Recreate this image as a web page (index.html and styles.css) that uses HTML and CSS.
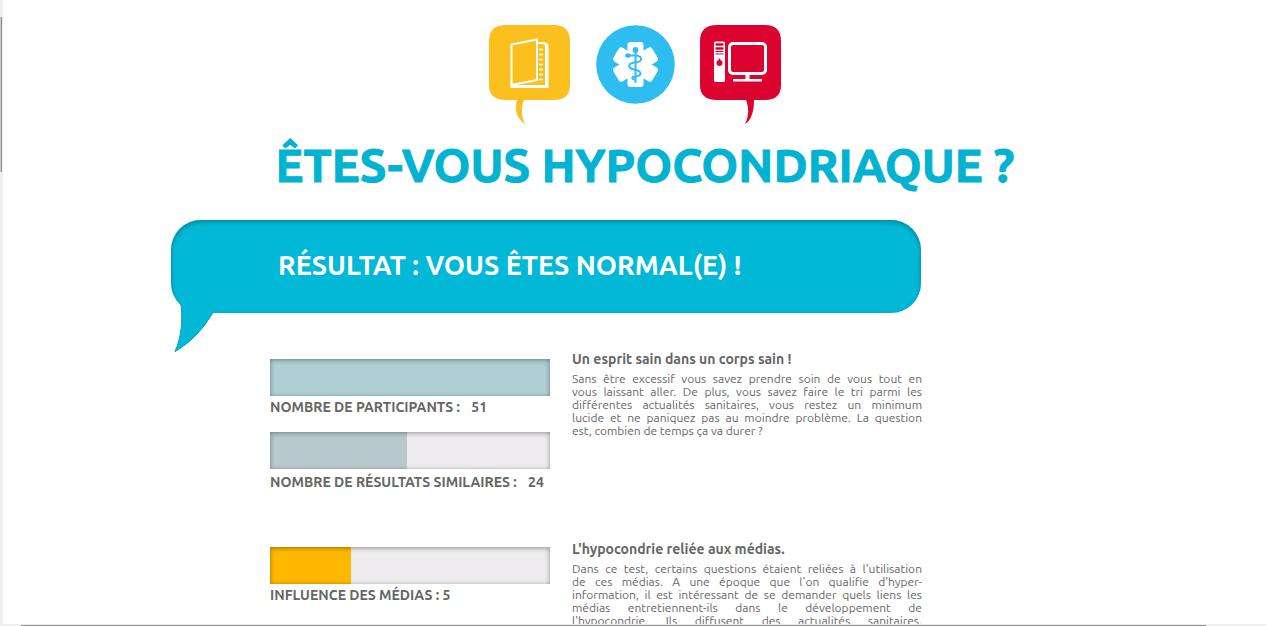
FILE: index.html
```html
<!DOCTYPE html>
<html lang="fr">
<head>
<meta charset="utf-8">
<title>Êtes-vous hypocondriaque ?</title>
<link rel="stylesheet" href="styles.css">
</head>
<body>
<div class="window">
  <div class="scroll-y"><div class="thumb-y"></div></div>
  <main class="page">
    <header class="header">
      <div class="icons">
        <svg class="icon" width="82" height="102" viewBox="0 0 82 102" role="img" aria-label="Livre">
          <path fill="#fcc01e" d="M17 0H65Q81 0 81 16V60Q81 75 65 75H35C32 82 32 91 36 99C26 93 26 82 28 75H17Q0 75 0 60V16Q0 0 17 0Z"/>
          <path fill="none" stroke="#fff" stroke-width="2" d="M22.500 19.500L48 14.500V55L22.500 60Z"/>
          <path fill="#fff" d="M49 17H54Q59.500 17 59.500 22V63H21.500V59L28 60H56V22Q56 19 53 19H49Z"/>
          <path stroke="#fff" stroke-width="1.500" d="M50 24.500H54M50 29.500H54M50 34.500H54M50 39.500H54M50 44.500H54M50 49.500H54M50 54.500H54"/>
        </svg>
        <svg class="icon" width="79" height="102" viewBox="0 0 79 102" role="img" aria-label="Santé">
          <circle cx="39.500" cy="39.500" r="39.300" fill="#2ebdf0"/>
          <g fill="#fff">
            <rect x="31.500" y="17" width="16" height="45" rx="3"/>
            <rect x="31.500" y="17" width="16" height="45" rx="3" transform="rotate(60 39.500 39.500)"/>
            <rect x="31.500" y="17" width="16" height="45" rx="3" transform="rotate(-60 39.500 39.500)"/>
          </g>
          <g fill="none" stroke="#2ebdf0" stroke-linecap="round">
            <path stroke-width="2" d="M39.500 26V57"/>
            <path stroke-width="2" d="M32 30.500H40C47 31 47 37 39 37.500C32 38 31 43 38 44.500C46 46 47 51 39 51.500C35 52 36 54 38 54.500"/>
          </g>
          <circle cx="39.500" cy="25" r="2.900" fill="#2ebdf0"/>
          <ellipse cx="32" cy="30.500" rx="2.800" ry="2.200" fill="#2ebdf0"/>
        </svg>
        <svg class="icon" width="82" height="102" viewBox="0 0 82 102" role="img" aria-label="Ordinateur">
          <path fill="#dc0330" d="M17 0H65Q81 0 81 16V60Q81 75 65 75H54C54 85 52 95 45 99C49 91 49 82 46 75H17Q0 75 0 60V16Q0 0 17 0Z"/>
          <rect x="14" y="16.500" width="11" height="40.500" rx="1.500" fill="#fff"/>
          <path stroke="#dc0330" stroke-width="2.500" d="M15.500 19.500H23.500M15.500 23.500H23.500"/>
          <path stroke="#dc0330" d="M15.500 26.500H23.500M15.500 29H23.500"/>
          <circle cx="19.500" cy="38" r="3" fill="#dc0330"/>
          <path stroke="#dc0330" stroke-width="1.500" d="M19.500 33.500V38"/>
          <rect x="29.500" y="18.500" width="36" height="30" rx="3.500" fill="none" stroke="#fff" stroke-width="3"/>
          <path fill="#fff" d="M45.500 49H49.500V54H62V56.500H33V54H45.500Z"/>
        </svg>
      </div>
      <h1 class="title">ÊTES-VOUS HYPOCONDRIAQUE ?</h1>
    </header>

    <section class="banner">
      <h2 class="banner-text">RÉSULTAT : VOUS ÊTES NORMAL(E) !</h2>
      <svg class="tail" width="46" height="52" viewBox="0 0 46 52" aria-hidden="true">
        <path fill="#01b9d6" d="M8 0L10 4C12 22 10 38 4 52C20 43 33 28 42 13V0Z"/>
        <path fill="none" stroke="#0a9db4" d="M10 4C12 22 10 38 4 51.500C20 42 33 28 41.500 13"/>
      </svg>
    </section>

    <div class="results">
      <section class="row">
        <div class="stats">
          <div class="bar"><div class="fill aqua" style="width:100%"></div></div>
          <p class="label">NOMBRE DE PARTICIPANTS : <span class="count">51</span></p>
          <div class="bar second"><div class="fill grey" style="width:49%"></div></div>
          <p class="label roomy">NOMBRE DE RÉSULTATS SIMILAIRES : <span class="count">24</span></p>
        </div>
        <article class="text">
          <h3 class="text-title">Un esprit sain dans un corps sain !</h3>
          <p class="copy">
            <span class="line">Sans être excessif vous savez prendre soin de vous tout en</span>
            <span class="line">vous laissant aller. De plus, vous savez faire le tri parmi les</span>
            <span class="line">différentes actualités sanitaires, vous restez un minimum</span>
            <span class="line">lucide et ne paniquez pas au moindre problème. La question</span>
            <span class="line last">est, combien de temps ça va durer ?</span>
          </p>
        </article>
      </section>
      <section class="row">
        <div class="stats">
          <div class="bar"><div class="fill amber" style="width:29%"></div></div>
          <p class="label">INFLUENCE DES MÉDIAS : 5</p>
        </div>
        <article class="text">
          <h3 class="text-title">L'hypocondrie reliée aux médias.</h3>
          <p class="copy">
            <span class="line">Dans ce test, certains questions étaient reliées à l'utilisation</span>
            <span class="line">de ces médias. A une époque que l'on qualifie d'hyper-</span>
            <span class="line">information, il est intéressant de se demander quels liens les</span>
            <span class="line">médias entretiennent-ils dans le développement de</span>
            <span class="line">l'hypocondrie. Ils diffusent des actualités sanitaires,</span>
          </p>
        </article>
      </section>
    </div>
  </main>
  <div class="scroll-x"><div class="thumb-x"></div></div>
</div>
</body>
</html>
```

FILE: styles.css
```css
* { box-sizing: border-box; }
body {
  margin: 0;
  background: #fff;
  color: #666;
  font-family: Ubuntu, "Noto Sans", "Open Sans", sans-serif;
}
h1, h2, h3, p { margin: 0; }

.window {
  display: grid;
  grid-template-columns: 3px 1fr;
  grid-template-rows: minmax(0, 1fr) 2px;
  height: 100vh;
  overflow: hidden;
}
.scroll-y { background: #eee; padding-top: 17px; }
.thumb-y {
  width: 2px;
  height: 155px;
  background: #ccc;
  border-right: 1px solid #8c8c8c;
}
.scroll-x {
  grid-column: 1 / -1;
  background: #eee;
  padding: 1px 60px 0 21px;
}
.thumb-x { height: 1px; background: #8c8c8c; }

.page {
  overflow: hidden;
  padding: 25px 0 0 168px;
}
.header { max-width: 948px; }
.icons {
  display: flex;
  justify-content: center;
  gap: 25px;
  margin-right: 20px;
}
.icon { display: block; }
.title {
  margin-top: 8px;
  text-align: center;
  white-space: nowrap;
  font-size: 47px;
  line-height: 60px;
  font-weight: 700;
  color: #01b3d0;
  -webkit-text-stroke: 1px #01b3d0;
}

.banner {
  position: relative;
  max-width: 750px;
  margin-top: 25px;
  padding: 25px 107px 28px;
  border-radius: 30px;
  background: #01b9d6;
  box-shadow: inset 0 2px 5px #078497;
}
.banner-text {
  color: #fff;
  font-size: 27px;
  line-height: 40px;
  font-weight: 700;
  white-space: nowrap;
}
.tail { position: absolute; left: 0; top: 80px; }

.results {
  max-width: 751px;
  margin-top: 38px;
  padding-left: 99px;
}
.row {
  display: grid;
  grid-template-columns: 280px 1fr;
  column-gap: 22px;
  min-height: 190px;
}
.stats { padding-top: 8px; }
.row + .row .stats { padding-top: 6px; }
.bar {
  position: relative;
  height: 37px;
  background: #eeecee;
}
.bar::after {
  content: "";
  position: absolute;
  inset: 0;
  box-shadow: inset 0 1px 5px rgba(0, 0, 0, 0.4);
}
.fill { height: 100%; }
.aqua { background: #afcfd4; }
.grey { background: #bac9ce; }
.amber { background: #ffb800; }
.label {
  padding-top: 1px;
  font-size: 14px;
  line-height: 20px;
  font-weight: 700;
  white-space: nowrap;
}
.second { margin-top: 15px; }
.roomy { padding-top: 3px; }
.count { margin-left: 8px; }

.text-title {
  font-size: 14px;
  line-height: 16px;
  font-weight: 700;
}
.copy {
  margin-top: 5px;
  font-size: 12px;
  line-height: 13px;
}
.line {
  display: block;
  text-align: justify;
  text-align-last: justify;
}
.last { text-align-last: left; }
```
